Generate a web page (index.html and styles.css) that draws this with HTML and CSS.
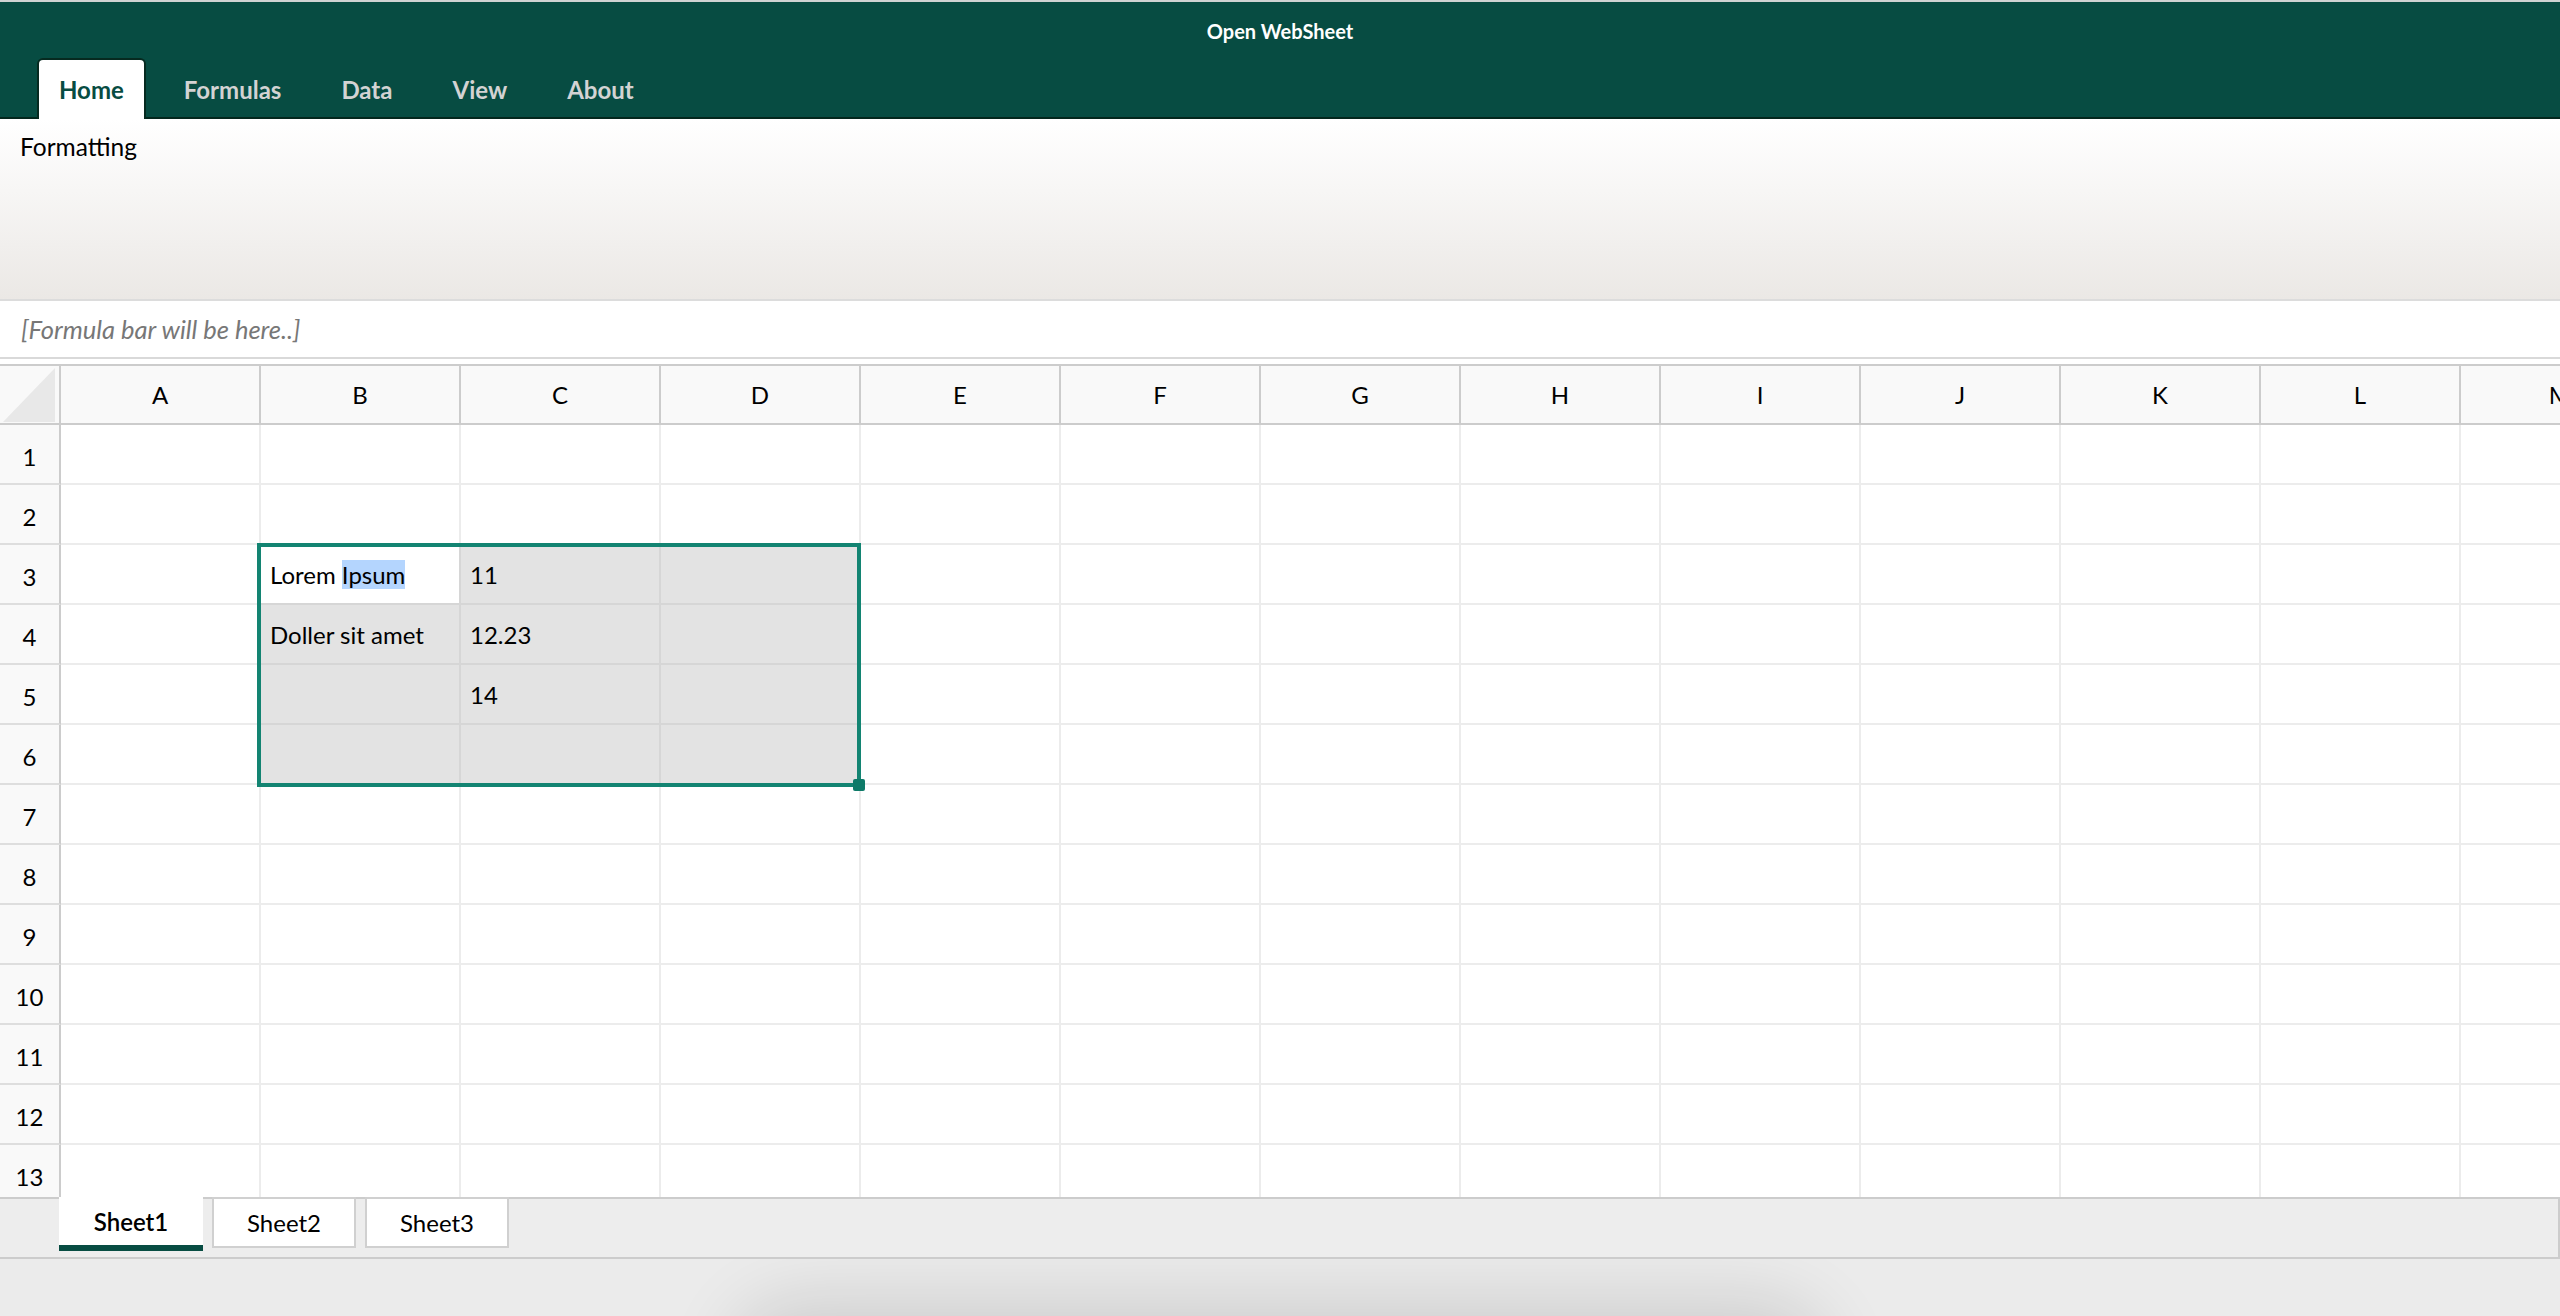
FILE: index.html
```html
<!DOCTYPE html>
<html lang="en">
<head>
<meta charset="utf-8">
<title>Open WebSheet</title>
<link rel="stylesheet" href="styles.css">
</head>
<body>
<div class="app">
  <header class="topbar">
    <div class="title">Open WebSheet</div>
    <nav class="tabs">
      <div class="tab active">Home</div>
      <div class="tab">Formulas</div>
      <div class="tab">Data</div>
      <div class="tab">View</div>
      <div class="tab">About</div>
    </nav>
  </header>
  <section class="ribbon">
    <div class="group-label">Formatting</div>
  </section>
  <div class="workspace">
    <div class="formula-bar">[Formula bar will be here..]</div>
    <div class="sheet">
      <div class="grid">
        <div class="corner"><div class="tri"></div></div>
        <div class="ch">A</div><div class="ch">B</div><div class="ch">C</div><div class="ch">D</div><div class="ch">E</div><div class="ch">F</div><div class="ch">G</div><div class="ch">H</div><div class="ch">I</div><div class="ch">J</div><div class="ch">K</div><div class="ch">L</div><div class="ch">M</div>

        <div class="rh">1</div><div class="c"></div><div class="c"></div><div class="c"></div><div class="c"></div><div class="c"></div><div class="c"></div><div class="c"></div><div class="c"></div><div class="c"></div><div class="c"></div><div class="c"></div><div class="c"></div><div class="c"></div>
        <div class="rh">2</div><div class="c"></div><div class="c"></div><div class="c"></div><div class="c"></div><div class="c"></div><div class="c"></div><div class="c"></div><div class="c"></div><div class="c"></div><div class="c"></div><div class="c"></div><div class="c"></div><div class="c"></div>
        <div class="rh">3</div><div class="c"></div><div class="c act">Lorem&nbsp;<span class="hl">Ipsum</span></div><div class="c s">11</div><div class="c s"></div><div class="c"></div><div class="c"></div><div class="c"></div><div class="c"></div><div class="c"></div><div class="c"></div><div class="c"></div><div class="c"></div><div class="c"></div>
        <div class="rh">4</div><div class="c"></div><div class="c s">Doller sit amet</div><div class="c s">12.23</div><div class="c s"></div><div class="c"></div><div class="c"></div><div class="c"></div><div class="c"></div><div class="c"></div><div class="c"></div><div class="c"></div><div class="c"></div><div class="c"></div>
        <div class="rh">5</div><div class="c"></div><div class="c s"></div><div class="c s">14</div><div class="c s"></div><div class="c"></div><div class="c"></div><div class="c"></div><div class="c"></div><div class="c"></div><div class="c"></div><div class="c"></div><div class="c"></div><div class="c"></div>
        <div class="rh">6</div><div class="c"></div><div class="c s"></div><div class="c s"></div><div class="c s"></div><div class="c"></div><div class="c"></div><div class="c"></div><div class="c"></div><div class="c"></div><div class="c"></div><div class="c"></div><div class="c"></div><div class="c"></div>
        <div class="rh">7</div><div class="c"></div><div class="c"></div><div class="c"></div><div class="c"></div><div class="c"></div><div class="c"></div><div class="c"></div><div class="c"></div><div class="c"></div><div class="c"></div><div class="c"></div><div class="c"></div><div class="c"></div>
        <div class="rh">8</div><div class="c"></div><div class="c"></div><div class="c"></div><div class="c"></div><div class="c"></div><div class="c"></div><div class="c"></div><div class="c"></div><div class="c"></div><div class="c"></div><div class="c"></div><div class="c"></div><div class="c"></div>
        <div class="rh">9</div><div class="c"></div><div class="c"></div><div class="c"></div><div class="c"></div><div class="c"></div><div class="c"></div><div class="c"></div><div class="c"></div><div class="c"></div><div class="c"></div><div class="c"></div><div class="c"></div><div class="c"></div>
        <div class="rh">10</div><div class="c"></div><div class="c"></div><div class="c"></div><div class="c"></div><div class="c"></div><div class="c"></div><div class="c"></div><div class="c"></div><div class="c"></div><div class="c"></div><div class="c"></div><div class="c"></div><div class="c"></div>
        <div class="rh">11</div><div class="c"></div><div class="c"></div><div class="c"></div><div class="c"></div><div class="c"></div><div class="c"></div><div class="c"></div><div class="c"></div><div class="c"></div><div class="c"></div><div class="c"></div><div class="c"></div><div class="c"></div>
        <div class="rh">12</div><div class="c"></div><div class="c"></div><div class="c"></div><div class="c"></div><div class="c"></div><div class="c"></div><div class="c"></div><div class="c"></div><div class="c"></div><div class="c"></div><div class="c"></div><div class="c"></div><div class="c"></div>
        <div class="rh">13</div><div class="c"></div><div class="c"></div><div class="c"></div><div class="c"></div><div class="c"></div><div class="c"></div><div class="c"></div><div class="c"></div><div class="c"></div><div class="c"></div><div class="c"></div><div class="c"></div><div class="c"></div>
      </div>
      <div class="selection"></div>
      <div class="handle"></div>
    </div>
  </div>
  <div class="sheet-tabs">
    <div class="stab active">Sheet1</div>
    <div class="stab">Sheet2</div>
    <div class="stab">Sheet3</div>
  </div>
  <div class="footer"></div>
</div>
</body>
</html>
```
FILE: styles.css
```css
html, body {
  margin: 0;
  padding: 0;
}
body {
  width: 2560px;
  height: 1316px;
  overflow: hidden;
  background: #ebebeb;
  font-family: Lato, "Open Sans", "Liberation Sans", sans-serif;
  color: #000;
}
.app {
  display: flex;
  flex-direction: column;
  height: 1316px;
}

/* top bar */
.topbar {
  background: #074c42;
  border-top: 2px solid #cfd3d2;
}
.title {
  height: 53px;
  padding-top: 3px;
  line-height: 53px;
  text-align: center;
  color: #fff;
  font-size: 20px;
  font-weight: 700;
}
.tabs {
  display: flex;
  align-items: flex-start;
  gap: 16px;
  height: 61px;
  box-sizing: border-box;
  padding-left: 37px;
  border-bottom: 2px solid #03271d;
}
.tab {
  height: 61px;
  box-sizing: border-box;
  display: flex;
  align-items: center;
  padding: 0 20px;
  border: 2px solid transparent;
  border-bottom: 0;
  border-radius: 6px 6px 0 0;
  font-size: 24px;
  font-weight: 700;
  color: #d3d3d3;
}
.tab.active {
  background: #fff;
  border-color: #062a20;
  color: #074c42;
}

/* ribbon */
.ribbon {
  height: 180px;
  border-bottom: 2px solid #dcdcdc;
  background: linear-gradient(to bottom, #ffffff 0%, #f7f6f5 40%, #ebe8e5 100%);
}
.group-label {
  padding: 13px 0 0 20px;
  line-height: 30px;
  font-size: 24.5px;
}

/* formula bar + sheet */
.workspace {
  background: #fff;
}
.formula-bar {
  height: 56px;
  line-height: 56px;
  padding-left: 21px;
  border-bottom: 2px solid #d9d9d9;
  font-size: 25.5px;
  font-style: italic;
  color: #777;
}
.sheet {
  position: relative;
  margin-top: 5px;
  height: 833px;
  box-sizing: border-box;
  border-top: 2px solid #cccccc;
  overflow: hidden;
  background: #fff;
}
.grid {
  display: grid;
  grid-template-columns: 61px repeat(13, 200px);
  grid-template-rows: 59px;
  grid-auto-rows: 60px;
  width: 2661px;
}
.grid > div {
  box-sizing: border-box;
  display: flex;
  align-items: center;
  font-size: 24px;
  white-space: nowrap;
  overflow: hidden;
}
.corner {
  background: #f9f9f9;
  border-right: 2px solid #cccccc;
  border-bottom: 2px solid #cccccc;
  align-items: flex-end !important;
}
.tri {
  width: 52px;
  height: 54px;
  margin: 0 0 1px 3px;
  background: #e8e8e8;
  clip-path: polygon(100% 0, 100% 100%, 0 100%);
}
.ch {
  justify-content: center;
  background: #f9f9f9;
  border-right: 2px solid #cccccc;
  border-bottom: 2px solid #cccccc;
}
.rh {
  justify-content: center;
  padding-top: 5px;
  background: #f9f9f9;
  border-right: 2px solid #cccccc;
  border-bottom: 2px solid #dedede;
}
.c {
  padding-left: 9px;
  border-right: 2px solid #ececec;
  border-bottom: 2px solid #ececec;
}
.c.s {
  background: #e3e3e3;
  border-color: #d6d6d6;
}
.c.act {
  background: #fff;
  border-color: #d6d6d6;
}
.hl {
  background: #b4d5fe;
}
.selection {
  position: absolute;
  left: 257px;
  top: 177px;
  width: 604px;
  height: 244px;
  box-sizing: border-box;
  border: 4px solid #138472;
  pointer-events: none;
}
.handle {
  position: absolute;
  left: 853px;
  top: 413px;
  width: 12px;
  height: 12px;
  border-radius: 2px;
  background: #0e7a68;
}

/* sheet tabs */
.sheet-tabs {
  display: flex;
  gap: 9px;
  height: 62px;
  box-sizing: border-box;
  padding-left: 59px;
  border-top: 2px solid #cccccc;
  border-bottom: 2px solid #cccccc;
  border-right: 2px solid #cccccc;
  background: #ededed;
}
.stab {
  width: 144px;
  height: 51px;
  margin-top: -2px;
  box-sizing: border-box;
  display: flex;
  align-items: center;
  justify-content: center;
  background: #fff;
  border: 2px solid #d0d0d0;
  font-size: 24px;
}
.stab.active {
  height: 54px;
  border: 0;
  border-bottom: 6px solid #074c42;
  font-weight: 600;
}

/* footer */
.footer {
  flex: 1;
  position: relative;
  overflow: hidden;
  background: #ebebeb;
}
.footer::after {
  content: "";
  position: absolute;
  left: 760px;
  width: 1040px;
  top: 70px;
  height: 100px;
  border-radius: 40px;
  box-shadow: 0 0 70px 30px rgba(0, 0, 0, 0.12);
}
```
